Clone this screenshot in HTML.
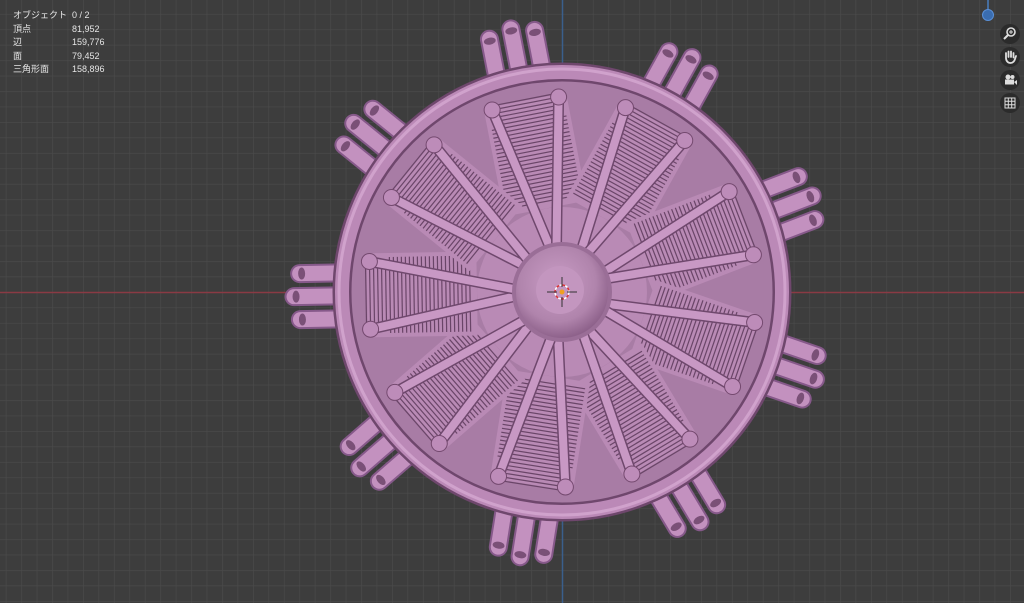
<!DOCTYPE html>
<html><head><meta charset="utf-8"><style>
html,body{margin:0;padding:0;background:#3d3d3d;width:1024px;height:603px;overflow:hidden;font-family:"Liberation Sans","Noto Sans CJK JP",sans-serif}
#v{position:absolute;left:0;top:0}
.st{position:absolute;left:13px;top:9px;color:#e6e6e6;font-size:9px;line-height:13.5px;white-space:nowrap}
.st div{display:flex}.st span:first-child{width:59px;flex:none}
.ic{position:absolute;left:1000px;width:20px;height:20px;border-radius:10px;background:#2b2b2b}
</style></head><body>
<svg id="v" width="1024" height="603" xmlns="http://www.w3.org/2000/svg">
<defs>
<pattern id="g" x="5.8" y="13.9" width="15.45" height="15.45" patternUnits="userSpaceOnUse">
<path d="M0 0H15.45M0 0V15.45" stroke="#4b4b4b" stroke-width="1.2" fill="none"/></pattern>
<radialGradient id="hub" cx="0.45" cy="0.4" r="0.6"><stop offset="0" stop-color="#c99cc5"/><stop offset="0.7" stop-color="#b084ac"/><stop offset="1" stop-color="#8e628b"/></radialGradient>
</defs>
<rect width="1024" height="603" fill="#3d3d3d"/>
<rect width="1024" height="603" fill="url(#g)"/>
<line x1="0" y1="292.5" x2="1024" y2="292.5" stroke="#8a3a44" stroke-width="1.5"/>
<line x1="562.5" y1="0" x2="562.5" y2="603" stroke="#3a5f8c" stroke-width="1.5"/>
<g id="eng"></g>
<line x1="988" y1="0" x2="988" y2="12" stroke="#4a7fc0" stroke-width="1.5"/>
<circle cx="988" cy="15" r="5.5" fill="#3a6db0" stroke="#5a90d8" stroke-width="1"/>
</svg>
<div class="st">
<div><span>オブジェクト</span><span>0 / 2</span></div>
<div><span>頂点</span><span>81,952</span></div>
<div><span>辺</span><span>159,776</span></div>
<div><span>面</span><span>79,452</span></div>
<div><span>三角形面</span><span>158,896</span></div>
</div>
<div class="ic" style="top:24px"><svg width="20" height="20"><circle cx="11" cy="8" r="4" fill="none" stroke="#ddd" stroke-width="1.6"/><line x1="8" y1="11" x2="4" y2="15" stroke="#ddd" stroke-width="2"/><path d="M9 8h4M11 6v4" stroke="#ddd" stroke-width="1"/></svg></div>
<div class="ic" style="top:47px"><svg width="20" height="20"><path d="M6 11V6M8.5 10V4.5M11 10V4.5M13.5 10.5V6M6 11c0 3 2 5 4.5 5s4-2 4.5-4l1-3" stroke="#ddd" stroke-width="1.8" fill="none" stroke-linecap="round"/></svg></div>
<div class="ic" style="top:70px"><svg width="20" height="20"><circle cx="8" cy="7" r="2.5" fill="#ddd"/><circle cx="12.5" cy="7" r="2" fill="#ddd"/><rect x="5" y="9.5" width="9" height="5" fill="#ddd"/><path d="M14 12l3-2v5z" fill="#ddd"/></svg></div>
<div class="ic" style="top:93px"><svg width="20" height="20"><path d="M5 5h10v10H5zM5 8.3h10M5 11.7h10M8.3 5v10M11.7 5v10" stroke="#ddd" stroke-width="1" fill="none"/></svg></div>
<script>
var cx=562,cy=292,s='';
function P(a,r){var t=a*Math.PI/180;return [cx+r*Math.cos(t),cy+r*Math.sin(t)];}
var ang=[];for(var k=0;k<9;k++)ang.push(-101+40*k);
ang.forEach(function(a){var t=a*Math.PI/180,ux=Math.cos(t),uy=Math.sin(t),px=-uy,py=ux;
 [-23,0,23].forEach(function(o,i){var r1=180,r2=(i==1?268:262);
  var x1=cx+ux*r1+px*o,y1=cy+uy*r1+py*o,x2=cx+ux*r2+px*o,y2=cy+uy*r2+py*o;
  s+='<line x1="'+x1+'" y1="'+y1+'" x2="'+x2+'" y2="'+y2+'" stroke="#86598a" stroke-width="19" stroke-linecap="round"/>';
  s+='<line x1="'+x1+'" y1="'+y1+'" x2="'+x2+'" y2="'+y2+'" stroke="#c391bf" stroke-width="15" stroke-linecap="round"/>';
  s+='<ellipse cx="'+(x2-ux*2)+'" cy="'+(y2-uy*2)+'" rx="3.5" ry="6" transform="rotate('+a+' '+(x2-ux*2)+' '+(y2-uy*2)+')" fill="#7a5077"/>';
 });});
s+='<circle cx="'+cx+'" cy="'+cy+'" r="218" fill="#a87ca5"/>';
ang.forEach(function(a){var t=a*Math.PI/180,ux=Math.cos(t),uy=Math.sin(t),px=-uy,py=ux;
 var c=P(a,140);
 s+='<rect x="-55" y="-42" width="110" height="84" fill="#b98ab5" transform="translate('+c[0]+' '+c[1]+') rotate('+a+')"/>';
 for(var r=92;r<200;r+=4){var w=r<175?38:28;
  s+='<line x1="'+(cx+ux*r+px*w)+'" y1="'+(cy+uy*r+py*w)+'" x2="'+(cx+ux*r-px*w)+'" y2="'+(cy+uy*r-py*w)+'" stroke="#6a4568" stroke-width="1.2"/>';}
});
s+='<circle cx="'+cx+'" cy="'+cy+'" r="85" fill="#b98ab5"/>';
ang.forEach(function(a){[a-10,a+10].forEach(function(b){var p1=P(b*0.3+a*0.7,40),p2=P(b,195);
 s+='<line x1="'+p1[0]+'" y1="'+p1[1]+'" x2="'+p2[0]+'" y2="'+p2[1]+'" stroke="#6f486d" stroke-width="11" stroke-linecap="round"/>';
 s+='<line x1="'+p1[0]+'" y1="'+p1[1]+'" x2="'+p2[0]+'" y2="'+p2[1]+'" stroke="#c898c4" stroke-width="8" stroke-linecap="round"/>';
 s+='<circle cx="'+p2[0]+'" cy="'+p2[1]+'" r="8" fill="#bd8cb9" stroke="#74496f" stroke-width="1"/>';});});
s+='<circle cx="'+cx+'" cy="'+cy+'" r="50" fill="#9a6e97"/>';
s+='<circle cx="'+cx+'" cy="'+cy+'" r="46" fill="url(#hub)"/>';
s+='<circle cx="'+(cx-2)+'" cy="'+(cy-2)+'" r="24" fill="#c396bf"/>';
s+='<circle cx="'+cx+'" cy="'+cy+'" r="220" fill="none" stroke="#6f476d" stroke-width="19"/>';
s+='<circle cx="'+cx+'" cy="'+cy+'" r="220" fill="none" stroke="#bb89b7" stroke-width="14"/>';
s+='<circle cx="'+cx+'" cy="'+cy+'" r="223" fill="none" stroke="#d0a2cc" stroke-width="3"/>';
s+='<circle cx="'+cx+'" cy="'+cy+'" r="7" fill="none" stroke="#fff" stroke-width="1.5" stroke-dasharray="3 3"/>';
s+='<circle cx="'+cx+'" cy="'+cy+'" r="7" fill="none" stroke="#d33" stroke-width="1.5" stroke-dasharray="3 3" stroke-dashoffset="3"/>';
s+='<path d="M'+(cx-15)+' '+cy+'h10M'+(cx+5)+' '+cy+'h10M'+cx+' '+(cy-15)+'v10M'+cx+' '+(cy+5)+'v10" stroke="#333" stroke-width="1"/>';
s+='<circle cx="'+cx+'" cy="'+cy+'" r="2.5" fill="#f0a020"/>';
document.getElementById('eng').innerHTML=s;
</script>
</body></html>
